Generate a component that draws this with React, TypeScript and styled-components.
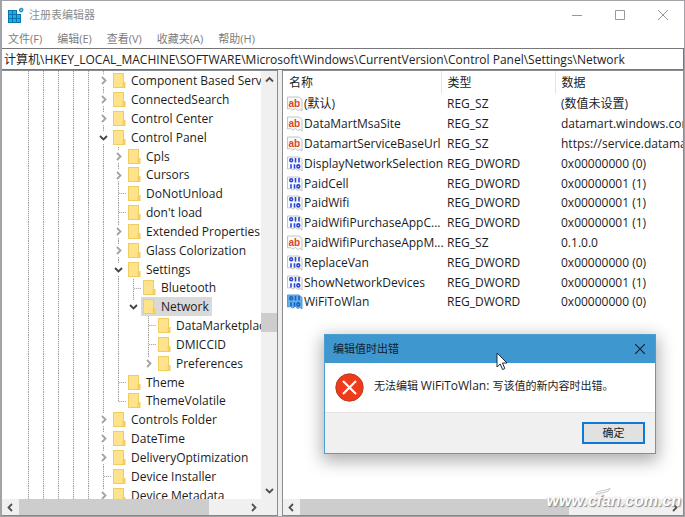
import React from 'react';
import styled, { createGlobalStyle, css } from 'styled-components';

const GlobalStyle = createGlobalStyle`
  * { box-sizing: border-box; }
  html, body, #root { height: 100%; }
  body {
    margin: 0;
    overflow: hidden;
    background: #a3a2a6;
    color: #1c1c1c;
    font: 12px/18px "Open Sans", "Noto Sans CJK SC", sans-serif;
  }
  button, input { font: inherit; color: inherit; }
  button { border: 0; padding: 0; background: none; }
`;

const Window = styled.main`
  position: relative;
  display: flex;
  flex-direction: column;
  height: 100%;
  padding: 1px 1px 1px 2px;
`;

const TitleBar = styled.header`
  display: flex;
  align-items: center;
  gap: 3px;
  height: 28px;
  padding-left: 6px;
  background: #fff;
  color: #8c8c8c;
`;

const Title = styled.h1`
  flex: 1;
  margin: 0;
  font-size: 11px;
  font-weight: 400;
`;

const WindowButton = styled.button`
  display: grid;
  place-items: center;
  width: 38px;
  height: 27px;
`;

const WindowButtons = styled.div`
  display: flex;
  gap: 5px;
  padding-right: 2px;
`;

const MenuBar = styled.nav`
  display: flex;
  gap: 15px;
  height: 19px;
  padding-left: 6px;
  background: #fff;
  color: #7c7c7c;
  font-size: 11px;
`;

const AddressBar = styled.input`
  width: 100%;
  height: 22px;
  padding: 0 2px;
  border: 1px solid #77777a;
  border-left: 0;
  background: #fff;
  color: #222;
  outline: 0;
`;

const Panes = styled.div`
  flex: 1;
  display: grid;
  grid-template-columns: 276px minmax(0, 1fr);
  gap: 4px;
  min-height: 0;
  background: #eee;
`;

const Pane = styled.section`
  display: grid;
  grid-template-rows: minmax(0, 1fr) 16px;
  min-width: 0;
  min-height: 0;
  border: 1px solid #8b8b92;
  border-bottom: 1px solid #85858b;
  background: #fff;
`;

const TreePane = styled(Pane)`
  grid-template-columns: minmax(0, 1fr) 16px;
  border-left: 0;
`;

const Tree = styled.ul`
  margin: 0;
  padding: 0 0 0 19px;
  overflow: hidden;
  list-style: none;
`;

const TreeRow = styled.li`
  display: flex;
  height: 19px;
  white-space: nowrap;
  &:nth-child(6n) { height: 18px; }
`;

const dots = 'repeating-linear-gradient(to bottom, #a2a2a2 0 1px, #e6e6e6 1px 2px)';
const dotsAcross = 'repeating-linear-gradient(to right, #b0b0b0 0 1px, #e6e6e6 1px 2px)';

type GuideKind = 'line' | 'blank' | 'tee' | 'elbow' | 'closed' | 'open' | 'openLast' | 'closedLast';

const guideFill: Record<GuideKind, string> = {
  line: `${dots} 7px 0 / 1px 100% no-repeat`,
  blank: 'none',
  tee: `${dots} 7px 0 / 1px 100% no-repeat, ${dotsAcross} 8px 9px / 7px 1px no-repeat`,
  elbow: `${dots} 7px 0 / 1px 10px no-repeat, ${dotsAcross} 8px 9px / 7px 1px no-repeat`,
  closed: `${dots} 7px 0 / 1px 3px no-repeat, ${dots} 7px 100% / 1px 3px no-repeat`,
  open: `${dots} 7px 0 / 1px 3px no-repeat, ${dots} 7px 100% / 1px 3px no-repeat`,
  openLast: `${dots} 7px 0 / 1px 3px no-repeat`,
  closedLast: `${dots} 7px 0 / 1px 3px no-repeat`,
};

const guideStyle = css<{ $kind: GuideKind }>`
  flex: none;
  display: grid;
  place-items: center;
  width: 15px;
  height: 100%;
  background: ${p => guideFill[p.$kind]};
`;
const Guide = styled.span<{ $kind: GuideKind }>`${guideStyle}`;
const Expander = styled.button<{ $kind: GuideKind }>`${guideStyle}`;

const TreeItem = styled.button<{ $selected?: boolean }>`
  display: flex;
  align-items: center;
  gap: 5px;
  height: 100%;
  padding: 0 3px 0 2px;
  background: ${p => (p.$selected ? '#d9d9d9' : 'none')};
`;

const VerticalBar = styled.div`
  display: grid;
  grid-template-rows: 17px 222fr 19px 148fr 17px;
  place-items: stretch;
  background: #f0f0f0;
`;

const HorizontalBar = styled.div<{ $columns: string }>`
  display: grid;
  grid-column: 1 / -1;
  grid-template-columns: ${p => p.$columns};
  background: #f0f0f0;
`;

const ArrowButton = styled.button`
  display: grid;
  place-items: center;
`;

const Thumb = styled.span`
  background: #cdcdcd;
`;

const ListArea = styled.div`
  overflow: hidden;
`;

const ValueTable = styled.table`
  width: 100%;
  table-layout: fixed;
  border-collapse: collapse;
  th, td {
    padding: 0 0 0 6px;
    overflow: hidden;
    font-weight: 400;
    text-align: left;
    white-space: nowrap;
  }
  th { height: 23px; border-right: 1px solid #e3e3e3; }
  th:last-child { border-right: 0; }
  td { height: 20px; }
  td:first-child { padding-left: 4px; overflow: visible; }
  tbody tr:nth-child(5n) td { height: 19px; }
`;

const NameColumn = styled.col`width: 158px;`;
const TypeColumn = styled.col`width: 114px;`;

const ValueName = styled.span`
  display: flex;
  align-items: center;
  gap: 1px;
  svg { flex: none; }
`;

const Dialog = styled.section`
  position: absolute;
  top: 334px;
  left: 324px;
  width: 332px;
  border: 1px solid #4c9fd3;
  background: #fff;
  box-shadow: 0 5px 16px 2px rgba(0, 0, 0, 0.32);
  font-size: 11px;
`;

const DialogTitle = styled.header`
  display: flex;
  align-items: center;
  justify-content: space-between;
  height: 28px;
  padding-left: 8px;
  background: #3f97cf;
  color: #10202c;
  h2 { margin: 0; font-size: 11px; font-weight: 400; }
`;

const DialogClose = styled.button`
  display: grid;
  place-items: center;
  width: 30px;
  height: 28px;
`;

const DialogMessage = styled.div`
  display: flex;
  align-items: center;
  gap: 10px;
  height: 49px;
  padding-left: 10px;
  p { margin: 0 0 4px; }
`;

const ValueLabel = styled.span`
  font-size: 12px;
`;

const DialogFooter = styled.footer`
  display: flex;
  justify-content: flex-end;
  padding: 9px 10px;
  border-top: 1px solid #e2e2e2;
  background: #f0f0f0;
`;

const OkButton = styled.button`
  width: 63px;
  height: 22px;
  border: 2px solid #0f79d4;
  background: #e1e1e1;
`;

const Pointer = styled.svg`
  position: absolute;
  top: 352px;
  left: 496px;
`;

const Watermark = styled.div`
  position: absolute;
  right: 4px;
  bottom: 4px;
  color: #fff;
  font: italic 700 16px/24px "Liberation Sans", sans-serif;
  text-shadow: 1px 1px 1px #888, 0 0 1px #aaa;
  pointer-events: none;
`;

const Swoosh = styled.svg`
  position: absolute;
  top: -2px;
  left: 48px;
`;

const AppIcon = () => (
  <svg width="18" height="18" viewBox="0 0 18 18" aria-hidden="true">
    <path d="M0 4h9v4h4v9H0z" fill="#0876b0" />
    <path d="M1 5h3v3H1zM5 5h3v3H5zM1 9h3v3H1zM5 9h3v3H5zM9 9h3v3H9zM1 13h3v3H1zM5 13h3v3H5zM9 13h3v3H9z" fill="#27a9e1" />
    <path d="m11 3 2.500-1.500 2 1.500-.5 2.500-2 1L11 5z" fill="#1688bd" />
    <path d="m12.200 3.300 1.300-.6.800.8-.5 1.500-1.300.2z" fill="#73d2f5" />
  </svg>
);

const Chevron = ({ dir, color = '#505050' }: { dir: 'up' | 'down' | 'left' | 'right'; color?: string }) => {
  const d = { up: 'M1 6.500 4.500 3 8 6.500', down: 'M1 3 4.500 6.500 8 3', left: 'M6 1 2.500 4.500 6 8', right: 'M3 1 6.500 4.500 3 8' }[dir];
  return (
    <svg width="9" height="9" viewBox="0 0 9 9" aria-hidden="true">
      <path d={d} fill="none" stroke={color} strokeWidth="1.800" />
    </svg>
  );
};

const Folder = () => (
  <svg width="13" height="16" viewBox="0 0 13 16" aria-hidden="true">
    <path d="M0 0h11v9h1.500v6H0z" fill="#f0cd60" />
    <path d="M1 1h9v13H1z" fill="#ffe38c" />
    <path d="M9.500 9.500h2.500v4.500H9.500z" fill="#f6cf5a" />
  </svg>
);

const ValueIcon = ({ kind, selected }: { kind: string; selected?: boolean }) => (
  <svg width="16" height="16" viewBox="0 0 16 16" aria-hidden="true">
    <path
      d="M.5 1h11.500l3 2.500V15l-2-1.500-2.500 1-2-2-3 1.500-2-1.500-3 .5z"
      fill={selected ? '#64b1ea' : '#fafafa'}
      stroke={selected ? '#4f9dd8' : '#c4c4c4'}
    />
    {kind === 'REG_SZ' ? (
      <text x="1.500" y="10.500" fontSize="10" fontWeight="700" fontFamily="Liberation Sans, sans-serif" fill="#dc4527">ab</text>
    ) : (
      <g fill="none" stroke={selected ? '#1c5fc4' : '#2747d8'} strokeWidth="1.600">
        <ellipse cx="4.200" cy="4.200" rx="1.400" ry="1.500" />
        <path d="M8.500 2v4.400M12 2v4.400M4 8.200v4.400M7.500 8.200v4.400" />
        <ellipse cx="11.300" cy="10.400" rx="1.400" ry="1.500" />
      </g>
    )}
  </svg>
);

type Node = { name: string; guides: GuideKind[]; selected?: boolean };
const base: GuideKind[] = ['line', 'line', 'line', 'line', 'line'];
const node = (name: string, ...guides: GuideKind[]): Node => ({
  name,
  guides: [...base, ...guides],
  selected: name === 'Network',
});

const nodes: Node[] = [
  node('Component Based Servicing', 'closed'),
  node('ConnectedSearch', 'closed'),
  node('Control Center', 'closed'),
  node('Control Panel', 'open'),
  node('Cpls', 'line', 'closed'),
  node('Cursors', 'line', 'closed'),
  node('DoNotUnload', 'line', 'tee'),
  node("don't load", 'line', 'tee'),
  node('Extended Properties', 'line', 'closed'),
  node('Glass Colorization', 'line', 'closed'),
  node('Settings', 'line', 'open'),
  node('Bluetooth', 'line', 'line', 'tee'),
  node('Network', 'line', 'line', 'openLast'),
  node('DataMarketplace', 'line', 'line', 'blank', 'tee'),
  node('DMICCID', 'line', 'line', 'blank', 'tee'),
  node('Preferences', 'line', 'line', 'blank', 'closedLast'),
  node('Theme', 'line', 'tee'),
  node('ThemeVolatile', 'line', 'elbow'),
  node('Controls Folder', 'closed'),
  node('DateTime', 'closed'),
  node('DeliveryOptimization', 'closed'),
  node('Device Installer', 'tee'),
  node('Device Metadata', 'closed'),
];

const values = [
  ['(默认)', 'REG_SZ', '(数值未设置)'],
  ['DataMartMsaSite', 'REG_SZ', 'datamart.windows.com'],
  ['DatamartServiceBaseUrl', 'REG_SZ', 'https://service.datamart'],
  ['DisplayNetworkSelection', 'REG_DWORD', '0x00000000 (0)'],
  ['PaidCell', 'REG_DWORD', '0x00000001 (1)'],
  ['PaidWifi', 'REG_DWORD', '0x00000001 (1)'],
  ['PaidWifiPurchaseAppC...', 'REG_DWORD', '0x00000001 (1)'],
  ['PaidWifiPurchaseAppM...', 'REG_SZ', '0.1.0.0'],
  ['ReplaceVan', 'REG_DWORD', '0x00000000 (0)'],
  ['ShowNetworkDevices', 'REG_DWORD', '0x00000001 (1)'],
  ['WiFiToWlan', 'REG_DWORD', '0x00000000 (0)'],
];

const GuideCell = ({ kind }: { kind: GuideKind }) => {
  if (kind.startsWith('open')) return <Expander $kind={kind} aria-label="折叠"><Chevron dir="down" color="#444" /></Expander>;
  if (kind.startsWith('closed')) return <Expander $kind={kind} aria-label="展开"><Chevron dir="right" color="#a3a3a3" /></Expander>;
  return <Guide $kind={kind} />;
};

export default function App() {
  return (
    <>
      <GlobalStyle />
      <Window>
        <TitleBar>
          <AppIcon />
          <Title>注册表编辑器</Title>
          <WindowButtons>
            <WindowButton aria-label="最小化">
              <svg width="10" height="10"><path d="M0 5.500h10" stroke="#999" /></svg>
            </WindowButton>
            <WindowButton aria-label="最大化">
              <svg width="10" height="10"><path d="M.5.5h9v9h-9z" fill="none" stroke="#999" /></svg>
            </WindowButton>
            <WindowButton aria-label="关闭">
              <svg width="10" height="10"><path d="m0 0 10 10M10 0 0 10" stroke="#999" /></svg>
            </WindowButton>
          </WindowButtons>
        </TitleBar>
        <MenuBar>
          {['文件(F)', '编辑(E)', '查看(V)', '收藏夹(A)', '帮助(H)'].map(m => <button key={m}>{m}</button>)}
        </MenuBar>
        <AddressBar
          aria-label="地址"
          defaultValue={'计算机\\HKEY_LOCAL_MACHINE\\SOFTWARE\\Microsoft\\Windows\\CurrentVersion\\Control Panel\\Settings\\Network'}
        />
        <Panes>
          <TreePane>
            <Tree>
              {nodes.map(n => (
                <TreeRow key={n.name}>
                  {n.guides.map((g, i) => <GuideCell key={i} kind={g} />)}
                  <TreeItem $selected={n.selected}><Folder />{n.name}</TreeItem>
                </TreeRow>
              ))}
            </Tree>
            <VerticalBar>
              <ArrowButton aria-label="向上滚动"><Chevron dir="up" /></ArrowButton>
              <span />
              <Thumb />
              <span />
              <ArrowButton aria-label="向下滚动"><Chevron dir="down" /></ArrowButton>
            </VerticalBar>
            <HorizontalBar $columns="17px 190fr 36fr 17px 15px">
              <ArrowButton aria-label="向左滚动"><Chevron dir="left" /></ArrowButton>
              <Thumb />
              <span />
              <ArrowButton aria-label="向右滚动"><Chevron dir="right" /></ArrowButton>
            </HorizontalBar>
          </TreePane>
          <Pane>
            <ListArea>
              <ValueTable>
                <colgroup><NameColumn /><TypeColumn /><col /></colgroup>
                <thead>
                  <tr><th>名称</th><th>类型</th><th>数据</th></tr>
                </thead>
                <tbody>
                  {values.map(([name, type, data]) => (
                    <tr key={name}>
                      <td><ValueName><ValueIcon kind={type} selected={name === 'WiFiToWlan'} />{name}</ValueName></td>
                      <td>{type}</td>
                      <td>{data}</td>
                    </tr>
                  ))}
                </tbody>
              </ValueTable>
            </ListArea>
            <HorizontalBar $columns="17px 269fr 97fr 17px">
              <ArrowButton aria-label="向左滚动"><Chevron dir="left" /></ArrowButton>
              <Thumb />
              <span />
              <ArrowButton aria-label="向右滚动"><Chevron dir="right" /></ArrowButton>
            </HorizontalBar>
          </Pane>
        </Panes>
        <Dialog role="alertdialog" aria-labelledby="error-title" aria-describedby="error-text">
          <DialogTitle>
            <h2 id="error-title">编辑值时出错</h2>
            <DialogClose aria-label="关闭">
              <svg width="10" height="10"><path d="m0 0 10 10M10 0 0 10" stroke="#14232e" strokeWidth="1.200" /></svg>
            </DialogClose>
          </DialogTitle>
          <DialogMessage>
            <svg width="29" height="29" viewBox="0 0 29 29" aria-hidden="true">
              <circle cx="14.500" cy="14.500" r="13.700" fill="#ef3b1a" stroke="#b93a25" />
              <path d="m8 8 13 13M21 8 8 21" stroke="#fff" strokeWidth="2.200" />
            </svg>
            <p id="error-text">无法编辑 <ValueLabel>WiFiToWlan: </ValueLabel>写该值的新内容时出错。</p>
          </DialogMessage>
          <DialogFooter><OkButton>确定</OkButton></DialogFooter>
        </Dialog>
        <Pointer width="12" height="19" viewBox="0 0 12 19" aria-hidden="true">
          <path d="M1 1v14l3.200-3 2.300 5.500 2.300-1L6.500 11H11z" fill="#fff" stroke="#1d2b3a" />
        </Pointer>
        <Watermark>
          www.cfan.com.cn
          <Swoosh width="18" height="9" viewBox="0 0 18 9" aria-hidden="true">
            <path d="M2 7.500C3 3 10 4.500 16 1.500 15 6 8 5 2 7.500z" fill="#fff" stroke="#aaa" strokeWidth=".7" />
          </Swoosh>
        </Watermark>
      </Window>
    </>
  );
}
